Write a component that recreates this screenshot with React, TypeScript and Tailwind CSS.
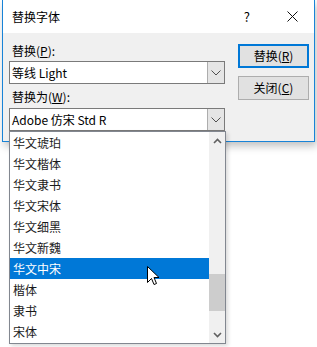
import React from "react";

const font = { fontFamily: '"Noto Sans CJK SC", "Noto Sans", sans-serif' };

function Chevron({ up = false, className = "" }: { up?: boolean; className?: string }) {
  return (
    <svg width="9" height="6" viewBox="0 0 9 6" className={className}>
      {up ? (
        <path d="M1 5 L4.5 1.5 L8 5" fill="none" stroke="#606060" strokeWidth="1.6" />
      ) : (
        <path d="M1 1 L4.5 4.5 L8 1" fill="none" stroke="#606060" strokeWidth="1.6" />
      )}
    </svg>
  );
}

function ComboArrow() {
  return (
    <svg width="10" height="6" viewBox="0 0 10 6">
      <path d="M0.5 0.5 L5 5 L9.5 0.5" fill="none" stroke="#505050" strokeWidth="1" />
    </svg>
  );
}

function Combo({ value }: { value: string }) {
  return (
    <div className="flex h-[23px] w-[216px] border border-[#7a7a7a] bg-white">
      <div className="flex flex-1 items-center pl-[2px] text-[12px] leading-none text-black">{value}</div>
      <div className="flex w-[17px] items-center justify-center border-l border-[#adadad] bg-[#e5e5e5]">
        <ComboArrow />
      </div>
    </div>
  );
}

const items = [
  "华文琥珀",
  "华文楷体",
  "华文隶书",
  "华文宋体",
  "华文细黑",
  "华文新魏",
  "华文中宋",
  "楷体",
  "隶书",
  "宋体",
];

export default function App() {
  return (
    <div className="relative h-[347px] w-[317px] overflow-hidden bg-white" style={font}>
      <div className="ml-[2px] h-[142px] w-[313px] border-x border-b border-[#1883d7] shadow-[2px_4px_8px_rgba(0,0,0,0.25)]">
        <div className="flex h-[33px] items-center bg-white pl-[9px] pr-[16px]">
          <span className="text-[12px] leading-none text-black">替换字体</span>
          <span className="ml-auto mr-[37px] text-[13px] leading-none text-black">?</span>
          <svg width="11" height="11" viewBox="0 0 11 11">
            <path d="M0.5 0.5 L10.5 10.5 M10.5 0.5 L0.5 10.5" stroke="#111" strokeWidth="1" />
          </svg>
        </div>
        <div className="flex h-[108px] bg-[#f0f0f0] pl-[6px]">
          <div className="flex flex-col">
            <div className="mt-[11px] h-[17px] pl-[3px] text-[12px] leading-[14px] text-black">
              替换(<span className="underline">P</span>):
            </div>
            <Combo value="等线 Light" />
            <div className="mt-[6px] h-[18px] pl-[3px] text-[12px] leading-[14px] text-black">
              替换为(<span className="underline">W</span>):
            </div>
            <Combo value="Adobe 仿宋 Std R" />
          </div>
          <div className="ml-[13px] mt-[11px] flex flex-col gap-[8px]">
            <div className="flex h-[24px] w-[71px] items-center justify-center border-2 border-[#0078d7] bg-[#e1e1e1] text-[12px] leading-none text-black">
              替换(<span className="underline">R</span>)
            </div>
            <div className="flex h-[24px] w-[71px] items-center justify-center border border-[#adadad] bg-[#e1e1e1] text-[12px] leading-none text-black">
              关闭(<span className="underline">C</span>)
            </div>
          </div>
        </div>
      </div>

      <div className="absolute left-[9px] top-[131px] flex h-[213px] w-[217px] border border-[#828790] bg-white shadow-[2px_2px_4px_rgba(0,0,0,0.15)]">
        <div className="flex flex-1 flex-col">
          {items.map((t, i) => (
            <div
              key={i}
              className={
                i === 6
                  ? "flex h-[21px] items-center bg-[#0078d7] pl-[3px] text-[12px] leading-none text-white"
                  : "flex h-[21px] items-center pl-[3px] text-[12px] leading-none text-[#1a1a1a]"
              }
            >
              {t}
            </div>
          ))}
        </div>
        <div className="flex w-[16px] flex-col bg-[#f0f0f0]">
          <div className="flex h-[17px] items-center justify-center">
            <Chevron up />
          </div>
          <div className="relative flex-1">
            <div className="absolute left-0 right-0 top-[125px] h-[37px] bg-[#cdcdcd]" />
          </div>
          <div className="flex h-[17px] items-center justify-center">
            <Chevron />
          </div>
        </div>
      </div>

      <svg className="absolute left-[147px] top-[266px]" width="13" height="20" viewBox="0 0 13 20">
        <path
          d="M0.5 0.5 L0.5 16.5 L4.5 12.5 L7 18.5 L9.5 17.5 L7 11.5 L12 11.5 Z"
          fill="#fff"
          stroke="#000"
          strokeWidth="1"
          strokeLinejoin="miter"
        />
      </svg>
    </div>
  );
}
